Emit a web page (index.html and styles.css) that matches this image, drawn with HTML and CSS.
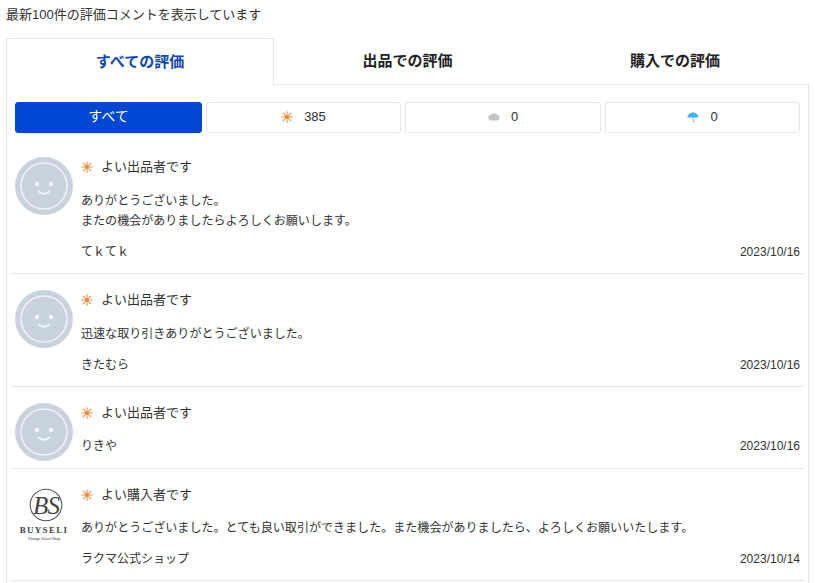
FILE: index.html
```html
<!DOCTYPE html>
<html lang="ja">
<head>
<meta charset="utf-8">
<title>評価</title>
<link rel="stylesheet" href="styles.css">
</head>
<body>
<svg class="defs" width="0" height="0" aria-hidden="true">
  <defs>
    <symbol id="sun" viewBox="0 0 14 14">
      <circle cx="7" cy="7" r="2.900" fill="#f58a3c"/>
      <g stroke="#f58a3c" stroke-width="1.300" stroke-linecap="round">
        <path d="M7 .8v2.400M7 10.800v2.400M.8 7h2.400M10.800 7h2.400M2.600 2.600l1.700 1.700M9.700 9.700l1.700 1.700M2.600 11.400l1.700-1.700M9.700 4.300l1.700-1.700"/>
      </g>
    </symbol>
    <symbol id="face" viewBox="0 0 58 58">
      <circle cx="29" cy="29" r="29" fill="#c9d3de"/>
      <circle cx="29" cy="29" r="23" fill="none" stroke="#eef1f5" stroke-width="1.700"/>
      <circle cx="22" cy="27" r="2.200" fill="#f4f6f8"/>
      <circle cx="36" cy="27" r="2.200" fill="#f4f6f8"/>
      <path d="M24 34.500c2.800 3 7.200 3 10 0" fill="none" stroke="#f4f6f8" stroke-width="1.800" stroke-linecap="round"/>
    </symbol>
  </defs>
</svg>

<p class="lead">最新100件の評価コメントを表示しています</p>

<nav class="tabs">
  <div class="tab tab-active">すべての評価</div>
  <div class="tab">出品での評価</div>
  <div class="tab">購入での評価</div>
</nav>

<section class="panel">
  <div class="filters">
    <div class="filter filter-active">すべて</div>
    <div class="filter"><svg class="ficon"><use href="#sun"/></svg><span>385</span></div>
    <div class="filter">
      <svg class="ficon" viewBox="0 0 14 14"><path d="M3.500 11C1.600 11 .5 9.400.5 7.800c0-1.600 1.100-2.800 2.500-3C3.800 3.500 5.300 2.900 7 2.900c1.800 0 3.200.7 4 1.900 1.400.2 2.500 1.400 2.500 3 0 1.600-1.100 3.200-3 3.200z" fill="#c4c4c4"/></svg><span>0</span>
    </div>
    <div class="filter">
      <svg class="ficon" viewBox="0 0 14 14"><path d="M.5 7.800C.9 4.300 3.600 1.800 7 1.800s6.100 2.500 6.500 6c-1.100-.8-2.300-.8-3.300 0-1-.8-2.200-.8-3.200 0-1-.8-2.200-.8-3.200 0-1-.8-2.200-.8-3.300 0z" fill="#35b5f2"/><path d="M7 7.500v4c0 1.500 2.100 1.500 2.100 0" fill="none" stroke="#9aa7c9" stroke-width="1.100"/></svg><span>0</span>
    </div>
  </div>

  <article class="review">
    <svg class="avatar"><use href="#face"/></svg>
    <div class="body">
      <div class="rating"><svg class="ricon"><use href="#sun"/></svg>よい出品者です</div>
      <p class="comment">ありがとうございました。<br>またの機会がありましたらよろしくお願いします。</p>
      <div class="meta"><span>てｋてｋ</span><time class="date">2023/10/16</time></div>
    </div>
  </article>

  <article class="review">
    <svg class="avatar"><use href="#face"/></svg>
    <div class="body">
      <div class="rating"><svg class="ricon"><use href="#sun"/></svg>よい出品者です</div>
      <p class="comment">迅速な取り引きありがとうございました。</p>
      <div class="meta"><span>きたむら</span><time class="date">2023/10/16</time></div>
    </div>
  </article>

  <article class="review">
    <svg class="avatar"><use href="#face"/></svg>
    <div class="body">
      <div class="rating"><svg class="ricon"><use href="#sun"/></svg>よい出品者です</div>
      <div class="meta"><span>りきや</span><time class="date">2023/10/16</time></div>
    </div>
  </article>

  <article class="review">
    <div class="logo">
      <svg class="logo-mark" viewBox="0 0 34 34">
        <circle cx="17" cy="17" r="15.800" fill="none" stroke="#555" stroke-width="1.100"/>
        <text x="17" y="25.500" text-anchor="middle" class="logo-bs">BS</text>
      </svg>
      <div class="logo-name">BUYSELI</div>
      <div class="logo-sub">Vintage Select Shop</div>
    </div>
    <div class="body">
      <div class="rating"><svg class="ricon"><use href="#sun"/></svg>よい購入者です</div>
      <p class="comment">ありがとうございました。とても良い取引ができました。また機会がありましたら、よろしくお願いいたします。</p>
      <div class="meta"><span>ラクマ公式ショップ</span><time class="date">2023/10/14</time></div>
    </div>
  </article>
</section>
</body>
</html>
```
FILE: styles.css
```css
* { box-sizing: border-box; }
html, body { height: 583px; overflow: hidden; }
body {
  margin: 0;
  padding: 0 6px;
  width: 815px;
  background: #fff;
  color: #333;
  font-family: "Liberation Sans", "Noto Sans CJK JP", sans-serif;
  font-size: 13px;
  line-height: 20px;
}
.defs { position: absolute; }
.lead { margin: 0; padding-top: 5px; height: 38px; }

.tabs { display: grid; grid-template-columns: 268px 267px 268px; height: 47px; }
.tab {
  display: flex;
  align-items: center;
  justify-content: center;
  padding-bottom: 1px;
  border-bottom: 1px solid #e4e4e4;
  color: #222;
  font-size: 15px;
  font-weight: 700;
}
.tab-active {
  border: 1px solid #e4e4e4;
  border-bottom: 0;
  border-radius: 3px 3px 0 0;
  color: #0f49b8;
}

.panel {
  width: 803px;
  height: 520px;
  padding: 17px 4px 0;
  border: 1px solid #e4e4e4;
  border-top: 0;
}
.filters {
  display: grid;
  grid-template-columns: 187px 195px 196px 195px;
  gap: 4px;
  height: 31px;
  margin: 0 4px 8px;
}
.filter {
  display: flex;
  align-items: center;
  justify-content: center;
  gap: 11px;
  padding-bottom: 1px;
  border: 1px solid #e4e4e4;
  border-radius: 3px;
  color: #333;
}
.filter-active {
  padding-bottom: 3px;
  border-color: #0048d4;
  background: #0048d4;
  color: #fff;
  font-size: 14px;
}
.ficon { width: 12px; height: 12px; }

.review {
  display: flex;
  gap: 8px;
  padding: 16px 0 7px 4px;
  border-bottom: 1px solid #e4e4e4;
}
.avatar { flex: none; width: 58px; height: 58px; }
.body { flex: 1; min-width: 0; padding: 0 4px 4px 0; }
.rating { display: flex; align-items: center; gap: 8px; height: 20px; }
.ricon { width: 12px; height: 12px; }
.comment { margin: 13.500px 0 0; font-size: 12.060px; line-height: 20.500px; }
.meta { display: flex; justify-content: space-between; align-items: center; height: 20px; font-size: 12px; }
.comment + .meta { margin-top: 10.500px; }
.rating + .meta { margin-top: 13px; }
.date { font-size: 12px; }

.logo { flex: none; width: 58px; height: 58px; margin-top: 3px; text-align: center; color: #333; }
.logo-mark { display: block; width: 34px; height: 34px; margin: 0 auto; transform: translateX(2px); }
.logo-bs { font-family: "Liberation Serif", serif; font-style: italic; font-size: 25px; letter-spacing: -1px; fill: #444; }
.logo-name { font-family: "Liberation Serif", serif; font-size: 9px; letter-spacing: 1.300px; line-height: 12px; margin-top: 2px; font-weight: 700; color: #444; white-space: nowrap; }
.logo-sub { font-family: "Liberation Serif", serif; font-size: 4px; line-height: 5px; white-space: nowrap; }
```
